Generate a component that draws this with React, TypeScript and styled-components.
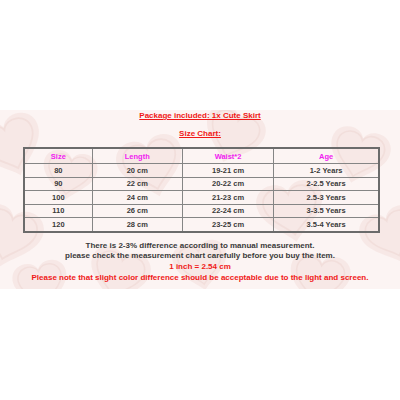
import styled, { createGlobalStyle } from 'styled-components'

const GlobalStyle = createGlobalStyle`
  html, body {
    margin: 0;
    padding: 0;
    background: #ffffff;
  }
  body {
    width: 400px;
    height: 400px;
    overflow: hidden;
    font-family: "Liberation Sans", Arial, sans-serif;
  }
`

const Page = styled.div`
  width: 400px;
  height: 400px;
  padding-top: 110px;
  box-sizing: border-box;
`

const Band = styled.section`
  position: relative;
  height: 179px;
  background: #fcf4f3;
  overflow: hidden;
  display: flex;
  flex-direction: column;
  align-items: center;
`

const Hearts = styled.svg`
  position: absolute;
  left: 0;
  top: 0;
  width: 400px;
  height: 179px;
`

const Content = styled.div`
  position: relative;
  display: flex;
  flex-direction: column;
  align-items: center;
  width: 100%;
`

const Heading = styled.div<{ $gap?: number }>`
  margin-top: ${p => p.$gap ?? 0}px;
  font-size: 8px;
  line-height: 12px;
  font-weight: bold;
  color: #f01818;
  text-decoration: underline;
`

const Table = styled.table`
  margin-top: 7px;
  margin-left: 3px;
  width: 357px;
  border-collapse: collapse;
  border: 2px solid #6b6b6b;
  font-size: 7.5px;
  font-weight: bold;
  text-align: center;
`

const Th = styled.th<{ $w: number }>`
  width: ${p => p.$w}px;
  height: 14px;
  padding: 0;
  border: 1.5px solid #858585;
  color: #f020f0;
  font-weight: bold;
`

const Td = styled.td`
  height: 12.5px;
  padding: 0;
  border: 1.5px solid #858585;
  color: #3a3a3a;
`

const Notes = styled.div`
  margin-top: 8px;
  display: flex;
  flex-direction: column;
  align-items: center;
  font-size: 8px;
  line-height: 10.7px;
  font-weight: bold;
`

const Line = styled.div<{ $red?: boolean }>`
  color: ${p => (p.$red ? '#f01818' : '#3a3a3a')};
  white-space: nowrap;
`

const heart = 'M0 -12 C-6 -26 -32 -22 -30 -2 C-28 14 -8 24 0 34 C8 24 28 14 30 -2 C32 -22 6 -26 0 -12 Z'

const hearts = [
  { x: 8, y: 30, r: -20, s: 1.1 },
  { x: 10, y: 120, r: 15, s: 1.1 },
  { x: 70, y: 60, r: 10, s: 0.9 },
  { x: 150, y: 50, r: -15, s: 1.1 },
  { x: 235, y: 20, r: 20, s: 1 },
  { x: 290, y: 95, r: -10, s: 1.1 },
  { x: 360, y: 40, r: 15, s: 1 },
  { x: 390, y: 120, r: -20, s: 1 },
  { x: 320, y: 165, r: 10, s: 1 },
  { x: 200, y: 150, r: -10, s: 0.9 },
  { x: 120, y: 160, r: 15, s: 1 },
  { x: 40, y: 170, r: -10, s: 0.9 },
]

const rows = [
  ['80', '20 cm', '19-21 cm', '1-2 Years'],
  ['90', '22 cm', '20-22 cm', '2-2.5 Years'],
  ['100', '24 cm', '21-23 cm', '2.5-3 Years'],
  ['110', '26 cm', '22-24 cm', '3-3.5 Years'],
  ['120', '28 cm', '23-25 cm', '3.5-4 Years'],
]

export default function App() {
  return (
    <>
      <GlobalStyle />
      <Page>
        <Band>
          <Hearts viewBox="0 0 400 179">
            {hearts.map((h, i) => (
              <g key={i} transform={`translate(${h.x} ${h.y}) rotate(${h.r}) scale(${h.s})`}>
                <path d={heart} fill="#f3dedb" opacity="0.55" />
                <path d={heart} fill="none" stroke="#ead2cf" strokeWidth="2" opacity="0.45" transform="scale(0.8)" />
              </g>
            ))}
          </Hearts>
          <Content>
            <Heading>Package included: 1x Cute Skirt</Heading>
            <Heading $gap={6}>Size Chart:</Heading>
            <Table>
              <thead>
                <tr>
                  <Th $w={68}>Size</Th>
                  <Th $w={91}>Length</Th>
                  <Th $w={92}>Waist*2</Th>
                  <Th $w={106}>Age</Th>
                </tr>
              </thead>
              <tbody>
                {rows.map(r => (
                  <tr key={r[0]}>
                    {r.map((c, j) => (
                      <Td key={j}>{c}</Td>
                    ))}
                  </tr>
                ))}
              </tbody>
            </Table>
            <Notes>
              <Line>There is 2-3% difference according to manual measurement.</Line>
              <Line>please check the measurement chart carefully before you buy the item.</Line>
              <Line $red>1 inch = 2.54 cm</Line>
              <Line $red>Please note that slight color difference should be acceptable due to the light and screen.</Line>
            </Notes>
          </Content>
        </Band>
      </Page>
    </>
  )
}
